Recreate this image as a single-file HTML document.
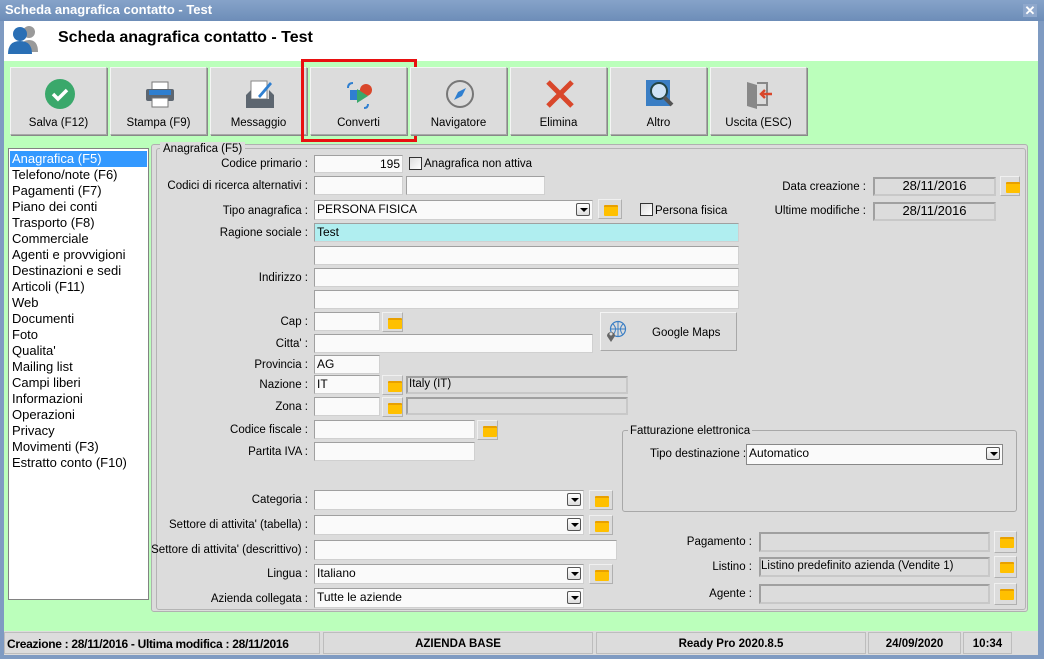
<!DOCTYPE html>
<html><head><meta charset="utf-8"><style>
*{box-sizing:border-box;margin:0;padding:0}
body{width:1044px;height:659px;overflow:hidden;background:#7f9bc2;font-family:"Liberation Sans",sans-serif;font-size:11.5px;line-height:15px;color:#000;position:relative}
.a{position:absolute}
.tb{left:0;top:0;width:1044px;height:21px;background:linear-gradient(#86a3c9,#6d8db8);color:#fff;font-weight:bold;font-size:13px;padding:3px 0 0 5px;line-height:14px}
.btn{background:#dcdcdc;border:1px solid #a8a8a8;border-top-color:#f4f4f4;border-left-color:#f4f4f4;box-shadow:1px 1px 0 #888}
.tbtn{top:67px;width:97px;height:68px;text-align:center;font-size:11.5px}
.tbtn span{position:absolute;left:0;right:0;bottom:3px}
.tbtn svg{position:absolute;left:33px;top:10px}
.lb{text-align:right;width:300px;left:8px;font-size:11.5px}
.in{background:#fafafa;border:1px solid #a0a0a0;border-right-color:#d0d0d0;border-bottom-color:#d0d0d0;padding:1px 2px;font-size:12px;white-space:nowrap;overflow:hidden}
.dis{background:#dcdcdc;border:2px solid #c8c8c8;border-top-color:#a0a0a0;border-left-color:#a0a0a0}
.dd{position:absolute;right:2px;top:2px;width:14px;height:13px;border:1px solid #555;border-radius:2px;background:linear-gradient(#fff,#ddd)}
.dd:after{content:"";position:absolute;left:3px;top:4px;border-left:4px solid transparent;border-right:4px solid transparent;border-top:4px solid #000}
.fb{width:24px;height:20px;background:#dcdcdc;border:1px solid #b0b0b0;border-top-color:#f0f0f0;border-left-color:#f0f0f0}
.fb:before{content:"";position:absolute;left:5px;top:5px;width:14px;height:9px;background:#ffc000;border-radius:1px;border-top:2px solid #e8a000}
.cb{width:13px;height:13px;border:1px solid #333;background:linear-gradient(135deg,#ddd,#fff)}
.li{left:12px;font-size:13px;height:16px}
.st{top:632px;height:22px;border:1px solid #bdbdbd;font-weight:bold;text-align:center;padding-top:4px}
</style></head><body>
<div class="a tb">Scheda anagrafica contatto - Test</div>
<div class="a" style="left:1023px;top:4px;width:14px;height:13px;color:#fff;font-weight:bold;font-size:13px;line-height:13px;text-align:center;background:#8fa8cc">✕</div>
<div class="a" style="left:4px;top:21px;width:1034px;height:40px;background:#fff"></div>
<svg class="a" style="left:6px;top:22px" width="34" height="34"><circle cx="23" cy="10" r="6" fill="#9a9a9a"/><path d="M14 30 q0-12 9-12 q9 0 9 12z" fill="#9a9a9a"/><circle cx="14" cy="12" r="7" fill="#2a6fb5"/><path d="M2 32 q0-13 12-13 q12 0 12 13z" fill="#2a6fb5"/></svg>
<div class="a" style="left:58px;top:29px;font-size:16px;line-height:18px;font-weight:bold">Scheda anagrafica contatto - Test</div>
<div class="a" style="left:4px;top:61px;width:1034px;height:570px;background:#bbffbb"></div>

<div class="a btn tbtn" style="left:10px"><svg width="32" height="32"><circle cx="16" cy="16" r="15" fill="#3aa86b"/><path d="M9 16 l5 5 l9-9" stroke="#fff" stroke-width="3.5" fill="none"/></svg><span>Salva (F12)</span></div>
<div class="a btn tbtn" style="left:110px"><svg width="32" height="32"><rect x="8" y="4" width="16" height="8" fill="#fff" stroke="#777"/><rect x="2" y="11" width="28" height="12" rx="2" fill="#5d6670"/><rect x="5" y="12" width="22" height="5" fill="#2f7fd0"/><rect x="8" y="20" width="16" height="9" fill="#fff" stroke="#777"/></svg><span>Stampa (F9)</span></div>
<div class="a btn tbtn" style="left:210px"><svg width="32" height="32"><rect x="7" y="3" width="16" height="18" fill="#fff" stroke="#888"/><path d="M2 17 l5-5 v9 h18 v-9 l5 5 v13 h-28z" fill="#5d6670"/><path d="M14 18 l12-14 l2 2 l-12 14 z" fill="#2f7fd0"/></svg><span>Messaggio</span></div>
<div class="a btn tbtn" style="left:310px"><svg width="32" height="32"><path d="M4 10 q0-5 5-5" stroke="#2f7fd0" stroke-width="2" fill="none"/><rect x="6" y="12" width="10" height="10" fill="#2f7fd0"/><circle cx="22" cy="12" r="6" fill="#d9472b"/><path d="M13 11 l11 7 l-11 7z" fill="#3aa86b"/><path d="M24 26 q0 4-4 4" stroke="#2f7fd0" stroke-width="2" fill="none"/></svg><span>Converti</span></div>
<div class="a" style="left:301px;top:59px;width:116px;height:83px;border:3px solid #e81010"></div>
<div class="a btn tbtn" style="left:410px"><svg width="32" height="32"><circle cx="16" cy="16" r="13" fill="none" stroke="#777" stroke-width="2"/><path d="M22 10 l-4 8 l-8 4 l4-8z" fill="#2f7fd0"/></svg><span>Navigatore</span></div>
<div class="a btn tbtn" style="left:510px"><svg width="32" height="32"><path d="M4 4 L28 28 M28 4 L4 28" stroke="#d9472b" stroke-width="5"/></svg><span>Elimina</span></div>
<div class="a btn tbtn" style="left:610px"><svg width="32" height="32"><rect x="2" y="2" width="24" height="26" fill="#3a7ec4"/><circle cx="15" cy="13" r="8" fill="#cfe3f5" stroke="#244" stroke-width="2"/><path d="M20 19 l8 8" stroke="#555" stroke-width="4"/></svg><span>Altro</span></div>
<div class="a btn tbtn" style="left:710px"><svg width="32" height="32"><path d="M3 4 l10 3 v24 l-10-3z" fill="#888"/><path d="M13 5 h10 v22 h-10" fill="none" stroke="#888" stroke-width="2"/><path d="M28 16 h-11 M21 12 l-4 4 l4 4" stroke="#d9472b" stroke-width="2.5" fill="none"/></svg><span>Uscita (ESC)</span></div>

<div class="a" style="left:8px;top:148px;width:141px;height:452px;background:#fff;border:1px solid #828282"></div>
<div class="a" style="left:10px;top:151px;width:137px;height:16px;background:#3399ff"></div>
<div class="a li" style="top:151px;color:#fff">Anagrafica (F5)</div>
<div class="a li" style="top:167px">Telefono/note (F6)</div>
<div class="a li" style="top:183px">Pagamenti (F7)</div>
<div class="a li" style="top:199px">Piano dei conti</div>
<div class="a li" style="top:215px">Trasporto (F8)</div>
<div class="a li" style="top:231px">Commerciale</div>
<div class="a li" style="top:247px">Agenti e provvigioni</div>
<div class="a li" style="top:263px">Destinazioni e sedi</div>
<div class="a li" style="top:279px">Articoli (F11)</div>
<div class="a li" style="top:295px">Web</div>
<div class="a li" style="top:311px">Documenti</div>
<div class="a li" style="top:327px">Foto</div>
<div class="a li" style="top:343px">Qualita'</div>
<div class="a li" style="top:359px">Mailing list</div>
<div class="a li" style="top:375px">Campi liberi</div>
<div class="a li" style="top:391px">Informazioni</div>
<div class="a li" style="top:407px">Operazioni</div>
<div class="a li" style="top:423px">Privacy</div>
<div class="a li" style="top:439px">Movimenti (F3)</div>
<div class="a li" style="top:455px">Estratto conto (F10)</div>

<div class="a" style="left:151px;top:144px;width:877px;height:468px;background:#dcdcdc;border:1px solid #b0b0b0;border-radius:3px"></div>
<div class="a" style="left:156px;top:148px;width:870px;height:462px;border:1px solid #b4b4b4;border-radius:3px"></div>
<div class="a" style="left:160px;top:142px;background:#dcdcdc;padding:0 3px">Anagrafica (F5)</div>

<div class="a lb" style="top:157px">Codice primario :</div>
<div class="a in" style="left:314px;top:155px;width:89px;height:18px;text-align:right">195</div>
<div class="a cb" style="left:409px;top:157px"></div><div class="a" style="left:424px;top:157px">Anagrafica non attiva</div>

<div class="a lb" style="top:179px">Codici di ricerca alternativi :</div>
<div class="a in" style="left:314px;top:176px;width:89px;height:19px"></div>
<div class="a in" style="left:406px;top:176px;width:139px;height:19px"></div>

<div class="a lb" style="top:204px">Tipo anagrafica :</div>
<div class="a in" style="left:314px;top:200px;width:279px;height:20px">PERSONA FISICA<div class="dd"></div></div>
<div class="a fb" style="left:598px;top:199px"></div>
<div class="a cb" style="left:640px;top:203px"></div><div class="a" style="left:655px;top:204px">Persona fisica</div>

<div class="a lb" style="top:226px">Ragione sociale :</div>
<div class="a in" style="left:314px;top:223px;width:425px;height:19px;background:#b0eef0">Test</div>
<div class="a in" style="left:314px;top:246px;width:425px;height:19px"></div>
<div class="a lb" style="top:271px">Indirizzo :</div>
<div class="a in" style="left:314px;top:268px;width:425px;height:19px"></div>
<div class="a in" style="left:314px;top:290px;width:425px;height:19px"></div>

<div class="a lb" style="top:315px">Cap :</div>
<div class="a in" style="left:314px;top:312px;width:66px;height:19px"></div>
<div class="a fb" style="left:382px;top:312px;width:21px"></div>
<div class="a btn" style="left:600px;top:312px;width:137px;height:39px;box-shadow:none"><svg class="a" style="left:3px;top:7px" width="24" height="24"><circle cx="14" cy="9" r="7.5" fill="none" stroke="#3a7ec4" stroke-width="1.2"/><path d="M6.5 9 h15 M14 1.5 v15 M9 4 q5 5 0 11 M19 4 q-5 5 0 11" stroke="#3a7ec4" fill="none" stroke-width="1"/><path d="M7 22 l-4-6 a4 4 0 1 1 8 0z" fill="#666"/><circle cx="7" cy="14" r="1.5" fill="#ddd"/></svg><div class="a" style="left:51px;top:13px">Google Maps</div></div>

<div class="a lb" style="top:337px">Citta' :</div>
<div class="a in" style="left:314px;top:334px;width:279px;height:19px"></div>
<div class="a lb" style="top:358px">Provincia :</div>
<div class="a in" style="left:314px;top:355px;width:66px;height:19px">AG</div>
<div class="a lb" style="top:378px">Nazione :</div>
<div class="a in" style="left:314px;top:375px;width:66px;height:19px">IT</div>
<div class="a fb" style="left:382px;top:375px;width:21px"></div>
<div class="a dis" style="left:406px;top:376px;width:222px;height:18px;padding:0 1px;line-height:13px">Italy (IT)</div>
<div class="a lb" style="top:400px">Zona :</div>
<div class="a in" style="left:314px;top:397px;width:66px;height:19px"></div>
<div class="a fb" style="left:382px;top:397px;width:21px"></div>
<div class="a dis" style="left:406px;top:397px;width:222px;height:18px"></div>
<div class="a lb" style="top:423px">Codice fiscale :</div>
<div class="a in" style="left:314px;top:420px;width:161px;height:19px"></div>
<div class="a fb" style="left:477px;top:420px;width:21px"></div>
<div class="a lb" style="top:445px">Partita IVA :</div>
<div class="a in" style="left:314px;top:442px;width:161px;height:19px"></div>

<div class="a" style="left:622px;top:430px;width:395px;height:82px;border:1px solid #a8a8a8;border-radius:3px"></div>
<div class="a" style="left:628px;top:424px;background:#dcdcdc;padding:0 2px">Fatturazione elettronica</div>
<div class="a" style="left:650px;top:447px">Tipo destinazione :</div>
<div class="a in" style="left:746px;top:444px;width:257px;height:21px;border:1px solid #888">Automatico<div class="dd"></div></div>

<div class="a lb" style="top:493px">Categoria :</div>
<div class="a in" style="left:314px;top:490px;width:270px;height:20px"><div class="dd"></div></div>
<div class="a fb" style="left:589px;top:490px"></div>
<div class="a lb" style="top:518px">Settore di attivita' (tabella) :</div>
<div class="a in" style="left:314px;top:515px;width:270px;height:20px"><div class="dd"></div></div>
<div class="a fb" style="left:589px;top:515px"></div>
<div class="a lb" style="top:543px">Settore di attivita' (descrittivo) :</div>
<div class="a in" style="left:314px;top:540px;width:303px;height:20px"></div>
<div class="a lb" style="top:567px">Lingua :</div>
<div class="a in" style="left:314px;top:564px;width:270px;height:20px">Italiano<div class="dd"></div></div>
<div class="a fb" style="left:589px;top:564px"></div>
<div class="a lb" style="top:592px">Azienda collegata :</div>
<div class="a in" style="left:314px;top:588px;width:270px;height:20px">Tutte le aziende<div class="dd"></div></div>

<div class="a" style="left:760px;top:180px;width:106px;text-align:right">Data creazione :</div>
<div class="a dis" style="left:873px;top:177px;width:123px;height:19px;text-align:center;font-size:13px;line-height:14px">28/11/2016</div>
<div class="a fb" style="left:1000px;top:176px;width:20px;height:20px"></div>
<div class="a" style="left:760px;top:204px;width:106px;text-align:right">Ultime modifiche :</div>
<div class="a dis" style="left:873px;top:202px;width:123px;height:19px;text-align:center;font-size:13px;line-height:14px">28/11/2016</div>

<div class="a" style="left:650px;top:535px;width:102px;text-align:right">Pagamento :</div>
<div class="a dis" style="left:759px;top:532px;width:231px;height:20px"></div>
<div class="a fb" style="left:994px;top:531px;width:23px;height:22px"></div>
<div class="a" style="left:650px;top:560px;width:102px;text-align:right">Listino :</div>
<div class="a dis" style="left:759px;top:557px;width:231px;height:20px;padding:0;line-height:14px">Listino predefinito azienda (Vendite 1)</div>
<div class="a fb" style="left:994px;top:556px;width:23px;height:22px"></div>
<div class="a" style="left:650px;top:587px;width:102px;text-align:right">Agente :</div>
<div class="a dis" style="left:759px;top:584px;width:231px;height:20px"></div>
<div class="a fb" style="left:994px;top:583px;width:23px;height:22px"></div>

<div class="a" style="left:4px;top:631px;width:1034px;height:24px;background:#dcdcdc"></div>
<div class="a st" style="left:4px;width:316px;font-size:12px;text-align:left;padding-left:2px;letter-spacing:-0.3px">Creazione : 28/11/2016 - Ultima modifica : 28/11/2016</div>
<div class="a st" style="left:323px;width:270px">AZIENDA BASE</div>
<div class="a st" style="left:596px;width:270px">Ready Pro 2020.8.5</div>
<div class="a st" style="left:868px;width:93px">24/09/2020</div>
<div class="a st" style="left:963px;width:49px">10:34</div>
</body></html>
